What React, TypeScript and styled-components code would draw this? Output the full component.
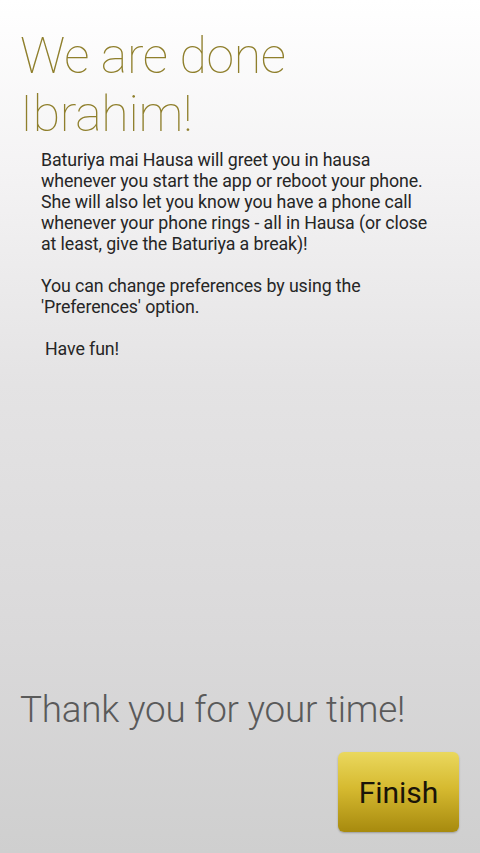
import React from 'react';
import styled, { createGlobalStyle } from 'styled-components';

const GlobalStyle = createGlobalStyle`
  html, body {
    margin: 0;
    padding: 0;
    height: 100%;
  }
  #root {
    height: 100%;
  }
`;

const Screen = styled.div`
  box-sizing: border-box;
  width: 480px;
  height: 853px;
  display: flex;
  flex-direction: column;
  padding: 27px 21px 21px 20px;
  background: linear-gradient(to bottom, #ffffff 0%, #f4f3f4 20%, #e4e3e4 45%, #dad9da 75%, #cfcfcf 100%);
  font-family: Roboto, "Noto Sans", sans-serif;
  overflow: hidden;
`;

const Title = styled.h1`
  margin: 0;
  font-family: Roboto, sans-serif;
  font-weight: 100;
  font-size: 50px;
  line-height: 58px;
  color: #8f7f2c;
  letter-spacing: -0.3px;
`;

const Body = styled.div`
  margin: 6px 0 0 21px;
  font-size: 17.8px;
  line-height: 21px;
  color: #262626;
  letter-spacing: -0.1px;
  white-space: nowrap;
`;

const Para = styled.p`
  margin: 0 0 21px 0;
`;

const Indented = styled(Para)`
  padding-left: 4px;
`;

const Spacer = styled.div`
  flex: 1;
`;

const Thanks = styled.div`
  font-weight: 300;
  font-size: 36.8px;
  line-height: 40px;
  color: #5a5a5a;
  letter-spacing: -0.2px;
`;

const Footer = styled.div`
  display: flex;
  justify-content: flex-end;
  margin-top: 22px;
`;

const FinishButton = styled.button`
  width: 121px;
  height: 80px;
  border: none;
  border-radius: 6px;
  background: linear-gradient(to bottom, #ead85e 0%, #d6ba30 45%, #a78a0e 100%);
  box-shadow: 0 1px 2px rgba(0, 0, 0, 0.25);
  font-family: Roboto, sans-serif;
  font-size: 30px;
  color: #1a1408;
  cursor: pointer;
`;

export default function App() {
  return (
    <>
      <GlobalStyle />
      <Screen>
        <Title>
          We are done
          <br />
          Ibrahim!
        </Title>
        <Body>
          <Para>
            Baturiya mai Hausa will greet you in hausa
            <br />
            whenever you start the app or reboot your phone.
            <br />
            She will also let you know you have a phone call
            <br />
            whenever your phone rings - all in Hausa (or close
            <br />
            at least, give the Baturiya a break)!
          </Para>
          <Para>
            You can change preferences by using the
            <br />
            'Preferences' option.
          </Para>
          <Indented>Have fun!</Indented>
        </Body>
        <Spacer />
        <Thanks>Thank you for your time!</Thanks>
        <Footer>
          <FinishButton>Finish</FinishButton>
        </Footer>
      </Screen>
    </>
  );
}
